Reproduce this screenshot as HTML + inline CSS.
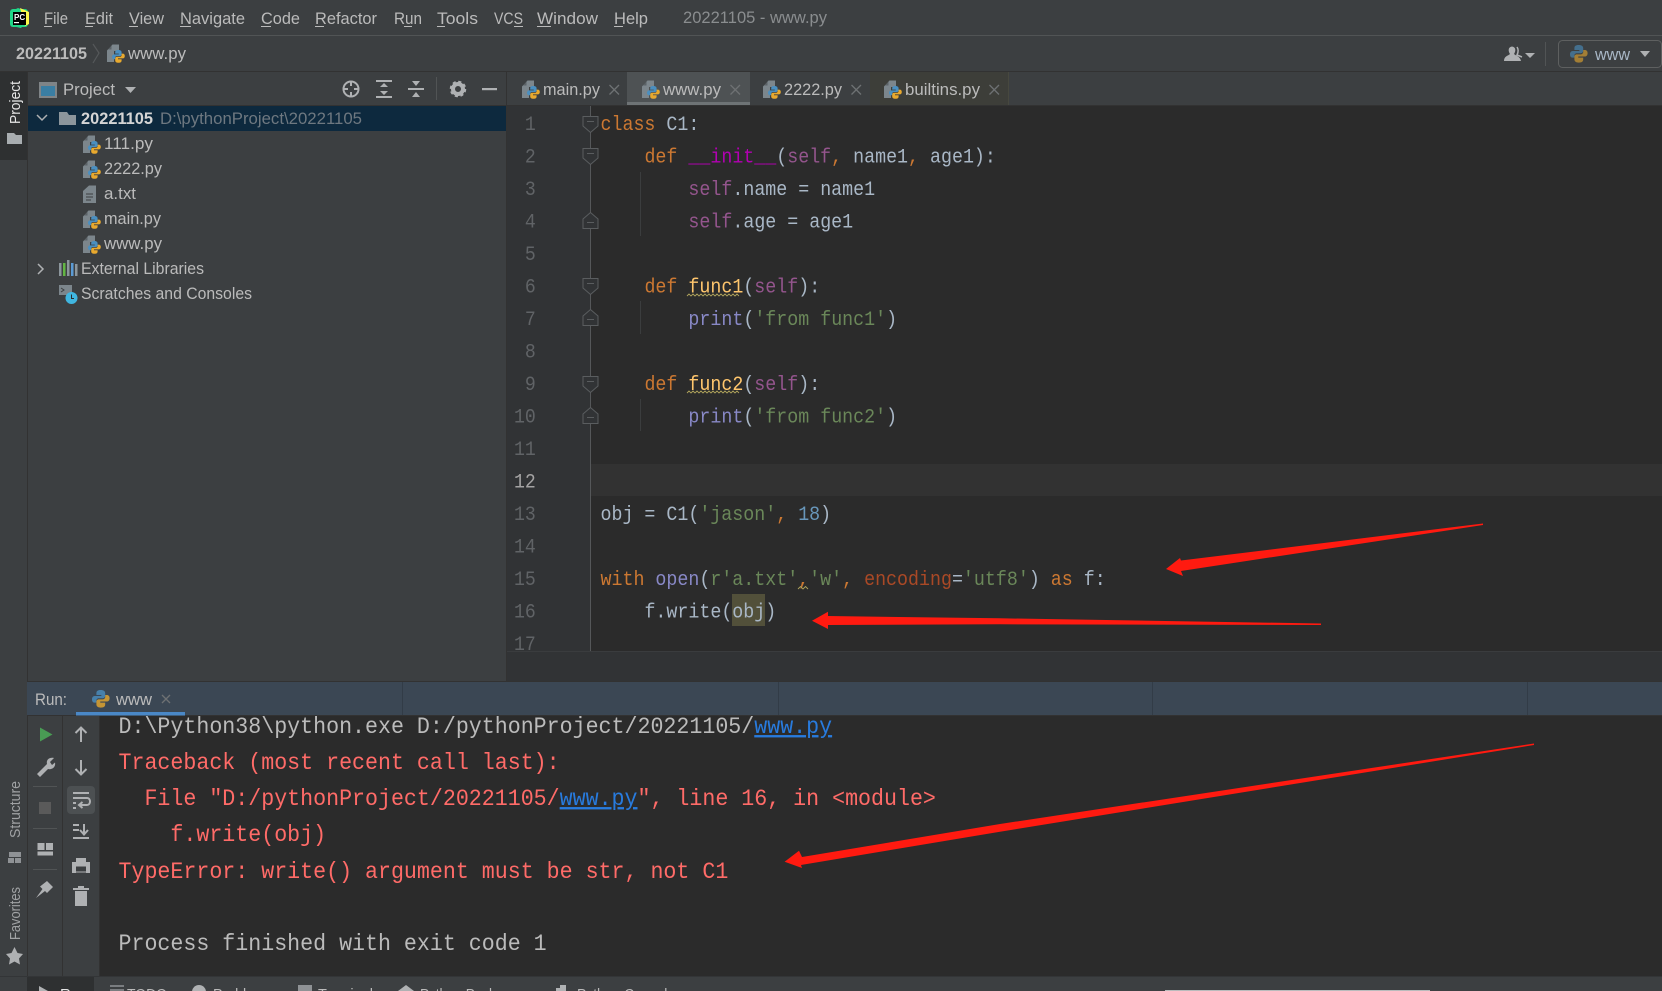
<!DOCTYPE html>
<html><head><meta charset="utf-8"><title>www.py</title>
<style>
html,body{margin:0;padding:0;background:#3c3f41;width:1662px;height:991px;overflow:hidden}
svg{display:block}
text{white-space:pre}
.u{font-family:"Liberation Sans",sans-serif;font-size:16.5px;fill:#bbbbbb}
.m{font-family:"Liberation Mono",monospace;font-size:20px;fill:#a9b7c6}
.c{font-family:"Liberation Mono",monospace;font-size:23.46px;fill:#ff6b68}
.n{font-family:"Liberation Mono",monospace;font-size:20px;fill:#606366}
.k{fill:#cc7832}.s{fill:#94558d}.g{fill:#6a8759}.b{fill:#8888c6}.f{fill:#ffc66d}.d{fill:#b200b2}.q{fill:#6897bb}.p{fill:#aa4926}
.i{fill:none;stroke:#afb1b3;stroke-width:2}
.x{stroke:#6e7173;stroke-width:1.3;fill:none}
.fold{fill:#313335;stroke:#5a5d5f;stroke-width:1}
</style></head><body>
<svg xmlns="http://www.w3.org/2000/svg" width="1662" height="991" viewBox="0 0 1662 991">
<defs>
<g id="sn"><path fill="#4a8fc0" d="M8 0C5 0 4 1 4 3V4.5H8.5V5.5H2.5C1 5.5 0 6.8 0 8.5C0 10.5 1 11.5 2.5 11.5H4V9.5C4 8.5 5 7.5 6 7.5H10C11 7.5 12 6.5 12 5.5V3C12 1 10.5 0 8 0Z"/><path fill="#e8a92e" transform="rotate(180 8 8)" d="M8 0C5 0 4 1 4 3V4.5H8.5V5.5H2.5C1 5.5 0 6.8 0 8.5C0 10.5 1 11.5 2.5 11.5H4V9.5C4 8.5 5 7.5 6 7.5H10C11 7.5 12 6.5 12 5.5V3C12 1 10.5 0 8 0Z"/></g>
<g id="py"><path fill="#7c868c" d="M0 6.5L5.5 0.5H12V7H7V18H0Z"/><path fill="#3c3f41" d="M4.5 1.5V5.5H1Z" opacity=".5"/><use href="#sn" transform="translate(5 6) scale(.8)"/></g>
<g id="fd"><path class="fold" d="M-7.5 -7.5H7.5V2L0 8.5L-7.5 2Z"/><path d="M-3.5 -2.5H3.5" stroke="#5a5d5f" stroke-width="1"/></g>
<g id="fu"><path class="fold" d="M-7.5 7.5H7.5V-2L0 -8.5L-7.5 -2Z"/><path d="M-3.5 1.5H3.5" stroke="#5a5d5f" stroke-width="1"/></g>
</defs>

<rect width="1662" height="991" fill="#3c3f41"/>
<!-- menu bar -->
<rect x="0" y="35" width="1662" height="1" fill="#515455"/>
<rect x="0" y="71" width="1662" height="1" fill="#323232"/>
<g>
<rect x="10" y="9" width="18" height="18" rx="3" fill="#21d789"/><path d="M10 12L18 8L28 12V20L21 28L12 26Z" fill="#21d789"/><path d="M20 8L29 12V24L25 26Z" fill="#fcf84a"/>
<rect x="13" y="12" width="13" height="13" fill="#000"/><text x="14" y="20" font-family="Liberation Sans,sans-serif" font-size="8" font-weight="700" fill="#fff">PC</text><rect x="14" y="22" width="5" height="1.2" fill="#fff"/>
</g>
<g class="menu">
<text class="u" x="44" y="24" textLength="24" lengthAdjust="spacingAndGlyphs">File</text><rect x="44" y="26" width="8" height="1" fill="#bbb"/>
<text class="u" x="85" y="24" textLength="28" lengthAdjust="spacingAndGlyphs">Edit</text><rect x="85" y="26" width="8" height="1" fill="#bbb"/>
<text class="u" x="129" y="24" textLength="35" lengthAdjust="spacingAndGlyphs">View</text><rect x="129" y="26" width="9" height="1" fill="#bbb"/>
<text class="u" x="180" y="24" textLength="65" lengthAdjust="spacingAndGlyphs">Navigate</text><rect x="180" y="26" width="11" height="1" fill="#bbb"/>
<text class="u" x="261" y="24" textLength="39" lengthAdjust="spacingAndGlyphs">Code</text><rect x="261" y="26" width="10" height="1" fill="#bbb"/>
<text class="u" x="315" y="24" textLength="62" lengthAdjust="spacingAndGlyphs">Refactor</text><rect x="315" y="26" width="9" height="1" fill="#bbb"/>
<text class="u" x="394" y="24" textLength="28" lengthAdjust="spacingAndGlyphs">Run</text><rect x="404" y="26" width="8" height="1" fill="#bbb"/>
<text class="u" x="437" y="24" textLength="41" lengthAdjust="spacingAndGlyphs">Tools</text><rect x="437" y="26" width="8" height="1" fill="#bbb"/>
<text class="u" x="494" y="24" textLength="29" lengthAdjust="spacingAndGlyphs">VCS</text><rect x="514" y="26" width="9" height="1" fill="#bbb"/>
<text class="u" x="537" y="24" textLength="61" lengthAdjust="spacingAndGlyphs">Window</text><rect x="537" y="26" width="14" height="1" fill="#bbb"/>
<text class="u" x="614" y="24" textLength="34" lengthAdjust="spacingAndGlyphs">Help</text><rect x="614" y="26" width="9" height="1" fill="#bbb"/>
<text class="u" x="683" y="23" textLength="144" lengthAdjust="spacingAndGlyphs" style="fill:#8a8d8f">20221105 - www.py</text>
</g>
<!-- nav bar -->
<text class="u" x="16" y="59" textLength="71" lengthAdjust="spacingAndGlyphs" font-weight="700" style="font-weight:700">20221105</text>
<path d="M93 44L99 53L93 63" fill="none" stroke="#55585a" stroke-width="1.2"/>
<use href="#py" transform="translate(107 44)"/>
<text class="u" x="128" y="59" textLength="58" lengthAdjust="spacingAndGlyphs">www.py</text>
<path d="M1504 61C1504 56 1508 56 1510 54C1508 51 1508 47 1512 46.500C1516 47 1516 51 1514 54C1516 56 1520 56 1521 61Z" fill="#afb1b3"/><path d="M1517 47C1519 50 1518 53 1517 55L1522 57" fill="none" stroke="#afb1b3" stroke-width="1.5"/>
<path d="M1525 53H1535L1530 58Z" fill="#afb1b3"/>
<rect x="1545" y="42" width="1" height="24" fill="#515455"/>
<rect x="1558.500" y="40.500" width="103" height="27" rx="4" fill="none" stroke="#5e6060"/>
<use href="#sn" transform="translate(1570 45) scale(1.1)" opacity=".6"/>
<text class="u" x="1595" y="60" textLength="35" lengthAdjust="spacingAndGlyphs" style="fill:#a9b7c6">www</text>
<path d="M1640 51H1650L1645 57Z" fill="#afb1b3"/>

<!-- left stripe -->
<rect x="27" y="72" width="1" height="904" fill="#323232"/>
<rect x="0" y="72" width="27" height="88" fill="#2e3031"/>
<text class="u" transform="translate(20 124) rotate(-90)" textLength="43" lengthAdjust="spacingAndGlyphs" style="font-size:14.500px;fill:#e6e6e6">Project</text>
<path d="M7 133H14L16 135H22V144H7Z" fill="#a8adb0"/>
<text class="u" transform="translate(20 838) rotate(-90)" textLength="57" lengthAdjust="spacingAndGlyphs" style="font-size:14.500px;fill:#a0a2a4">Structure</text>
<path d="M9 857h6v-5h-6zM8 858h6v5h-6zM15 852h6v5h-6zM15 858h6v5h-6z" fill="#8f9295"/>
<text class="u" transform="translate(20 940) rotate(-90)" textLength="53" lengthAdjust="spacingAndGlyphs" style="font-size:14.500px;fill:#a0a2a4">Favorites</text>
<path d="M14.500 947L17.500 953L23 954L19 958.500L20 964.500L14.500 961.500L9 964.500L10 958.500L6 954L11.500 953Z" fill="#afb1b3"/>

<!-- project header -->
<rect x="39" y="82" width="18" height="16" fill="#7f8487"/><rect x="41" y="86" width="14" height="10" fill="#3a7ea3"/>
<text class="u" x="63" y="95" textLength="52" lengthAdjust="spacingAndGlyphs">Project</text>
<path d="M125 87H136L130.500 93Z" fill="#afb1b3"/>
<circle cx="351" cy="89" r="7.500" class="i"/><path d="M351 81.500V86M351 92V96.500M343.500 89H348M354 89H358.500" class="i"/>
<path d="M376 81H392M376 97H392" class="i"/><path d="M380 87L384 83L388 87ZM380 91L384 95L388 91Z" fill="#afb1b3"/>
<path d="M408 89H424" class="i"/><path d="M412 81L416 86L420 81ZM412 97L416 92L420 97Z" fill="#afb1b3"/>
<rect x="436" y="77" width="1" height="23" fill="#515455"/>
<circle cx="458" cy="89" r="5" fill="none" stroke="#afb1b3" stroke-width="4"/><circle cx="458" cy="89" r="7" fill="none" stroke="#afb1b3" stroke-width="2.500" stroke-dasharray="3 2.500"/>
<rect x="482" y="88" width="15" height="2.200" fill="#afb1b3"/>
<rect x="27" y="105" width="480" height="1" fill="#323232"/>

<!-- tree -->
<rect x="28" y="106" width="478" height="25" fill="#0d293e"/>
<path d="M37 115L42 120L47 115" fill="none" stroke="#afb1b3" stroke-width="1.500"/>
<path d="M59 112H67L69 115H76V125H59Z" fill="#8c969c"/>
<text class="u" x="81" y="124" textLength="72" lengthAdjust="spacingAndGlyphs" style="font-weight:700;fill:#d5d5d5">20221105</text>
<text class="u" x="160" y="124" textLength="202" lengthAdjust="spacingAndGlyphs" style="fill:#6e7880">D:\pythonProject\20221105</text>
<use href="#py" transform="translate(83 135)"/><text class="u" x="104" y="149" textLength="49" lengthAdjust="spacingAndGlyphs">111.py</text>
<use href="#py" transform="translate(83 160)"/><text class="u" x="104" y="174" textLength="58" lengthAdjust="spacingAndGlyphs">2222.py</text>
<path d="M83 191L89 185.500H96V203H83Z" fill="#7c868c"/><path d="M86 194H93M86 197H93M86 200H91" stroke="#3c3f41" stroke-width="1"/>
<text class="u" x="104" y="199" textLength="32" lengthAdjust="spacingAndGlyphs">a.txt</text>
<use href="#py" transform="translate(83 210)"/><text class="u" x="104" y="224" textLength="57" lengthAdjust="spacingAndGlyphs">main.py</text>
<use href="#py" transform="translate(83 235)"/><text class="u" x="104" y="249" textLength="58" lengthAdjust="spacingAndGlyphs">www.py</text>
<path d="M38 264L43 269L38 274" fill="none" stroke="#afb1b3" stroke-width="1.500"/>
<rect x="59" y="263" width="2.500" height="13" fill="#8c969c"/><rect x="63" y="263" width="2.500" height="13" fill="#62b543"/><rect x="67" y="260" width="2.500" height="16" fill="#8c969c"/><rect x="71" y="263" width="2.500" height="13" fill="#5b9bd5"/><rect x="75" y="264" width="2.500" height="12" fill="#8c969c"/>
<text class="u" x="81" y="274" textLength="123" lengthAdjust="spacingAndGlyphs">External Libraries</text>
<path d="M59 285H72V295H59Z" fill="#7c868c"/><path d="M61 288L64 290L61 292" fill="none" stroke="#3c3f41"/><circle cx="71.500" cy="298" r="6" fill="#40b6e0"/><path d="M71.500 294.500V298.500H74" stroke="#2b2b2b" stroke-width="1" fill="none"/>
<text class="u" x="81" y="299" textLength="171" lengthAdjust="spacingAndGlyphs">Scratches and Consoles</text>

<!-- tabs -->
<rect x="506" y="72" width="1" height="610" fill="#323232"/>
<rect x="507" y="72" width="1155" height="34" fill="#3c3f41"/>
<rect x="627" y="72" width="123" height="30" fill="#4e5254"/>
<rect x="627" y="102" width="123" height="4" fill="#6e7375"/>
<rect x="870" y="72" width="138" height="33" fill="#3d3e39"/>
<rect x="1008" y="72" width="1" height="33" fill="#47483f"/>
<rect x="507" y="105" width="1155" height="1" fill="#323232"/>
<use href="#py" transform="translate(522 80)"/><text class="u" x="543" y="95" textLength="57" lengthAdjust="spacingAndGlyphs">main.py</text><path class="x" d="M609.500 85L619 94.500M619 85L609.500 94.500"/>
<use href="#py" transform="translate(642 80)"/><text class="u" x="663" y="95" textLength="58" lengthAdjust="spacingAndGlyphs">www.py</text><path class="x" d="M730.500 85L740 94.500M740 85L730.500 94.500"/>
<use href="#py" transform="translate(763 80)"/><text class="u" x="784" y="95" textLength="58" lengthAdjust="spacingAndGlyphs">2222.py</text><path class="x" d="M851.500 85L861 94.500M861 85L851.500 94.500"/>
<use href="#py" transform="translate(884 80)"/><text class="u" x="905" y="95" textLength="75" lengthAdjust="spacingAndGlyphs">builtins.py</text><path class="x" d="M989.500 85L999 94.500M999 85L989.500 94.500"/>

<!-- editor -->
<rect x="507" y="106" width="1155" height="545" fill="#2b2b2b"/>
<rect x="507" y="106" width="84" height="545" fill="#313335"/>
<rect x="591" y="464" width="1071" height="32" fill="#323232"/>
<rect x="590" y="106" width="1" height="545" fill="#555759"/>
<rect x="640" y="172" width="1" height="64" fill="#3b3d3e"/><rect x="640" y="301" width="1" height="33" fill="#3b3d3e"/><rect x="640" y="399" width="1" height="32" fill="#3b3d3e"/>
<rect x="732" y="594" width="33" height="32" fill="#52503a"/>
<use href="#fd" x="590.500" y="124"/><use href="#fd" x="590.500" y="156"/><use href="#fu" x="590.500" y="221"/><use href="#fd" x="590.500" y="286"/><use href="#fu" x="590.500" y="318"/><use href="#fd" x="590.500" y="384"/><use href="#fu" x="590.500" y="416"/>
<clipPath id="ed"><rect x="507" y="106" width="1155" height="545"/></clipPath>
<g clip-path="url(#ed)">
<g transform="translate(514 0) scale(.9085 1)">
<text class="n" x="12" y="130">1</text><text class="n" x="12" y="162.500">2</text><text class="n" x="12" y="195">3</text><text class="n" x="12" y="227.500">4</text><text class="n" x="12" y="260">5</text><text class="n" x="12" y="292.500">6</text><text class="n" x="12" y="325">7</text><text class="n" x="12" y="357.500">8</text><text class="n" x="12" y="390">9</text><text class="n" x="0" y="422.500">10</text><text class="n" x="0" y="455">11</text><text class="n" x="0" y="487.500" style="fill:#a4a3a3">12</text><text class="n" x="0" y="520">13</text><text class="n" x="0" y="552.500">14</text><text class="n" x="0" y="585">15</text><text class="n" x="0" y="617.500">16</text><text class="n" x="0" y="650">17</text>
</g>
<g transform="translate(600.500 0) scale(.916 1)">
<text class="m" x="0" y="130"><tspan class="k">class</tspan> C1:</text>
<text class="m" x="48" y="162.500"><tspan class="k">def</tspan> <tspan class="d">__init__</tspan>(<tspan class="s">self</tspan><tspan class="k">,</tspan> name1<tspan class="k">,</tspan> age1):</text>
<text class="m" x="96" y="195"><tspan class="s">self</tspan>.name = name1</text>
<text class="m" x="96" y="227.500"><tspan class="s">self</tspan>.age = age1</text>
<text class="m" x="48" y="292.500"><tspan class="k">def</tspan> <tspan class="f">func1</tspan>(<tspan class="s">self</tspan>):</text>
<text class="m" x="96" y="325"><tspan class="b">print</tspan>(<tspan class="g">'from func1'</tspan>)</text>
<text class="m" x="48" y="390"><tspan class="k">def</tspan> <tspan class="f">func2</tspan>(<tspan class="s">self</tspan>):</text>
<text class="m" x="96" y="422.500"><tspan class="b">print</tspan>(<tspan class="g">'from func2'</tspan>)</text>
<text class="m" x="0" y="520">obj = C1(<tspan class="g">'jason'</tspan><tspan class="k">,</tspan> <tspan class="q">18</tspan>)</text>
<text class="m" x="0" y="585"><tspan class="k">with</tspan> <tspan class="b">open</tspan>(<tspan class="g">r'a.txt'</tspan><tspan class="k">,</tspan><tspan class="g">'w'</tspan><tspan class="k">,</tspan> <tspan class="p">encoding</tspan>=<tspan class="g">'utf8'</tspan>) <tspan class="k">as</tspan> f:</text>
<text class="m" x="48" y="617.500">f.write(obj)</text>
</g>
</g>
<path d="M687 296l2-2 2 2 2-2 2 2 2-2 2 2 2-2 2 2 2-2 2 2 2-2 2 2 2-2 2 2 2-2 2 2 2-2 2 2 2-2 2 2 2-2 2 2 2-2 2 2 2-2 2 2" fill="none" stroke="#b0a35c" stroke-width=".9"/>
<path d="M687 393l2-2 2 2 2-2 2 2 2-2 2 2 2-2 2 2 2-2 2 2 2-2 2 2 2-2 2 2 2-2 2 2 2-2 2 2 2-2 2 2 2-2 2 2 2-2 2 2 2-2 2 2" fill="none" stroke="#b0a35c" stroke-width=".9"/>
<path d="M798 589l2.500-2.500 2.500 2.500 2.500-2.500 2.500 2.500" fill="none" stroke="#b0a35c" stroke-width=".9"/>
<rect x="507" y="651" width="1155" height="31" fill="#313335"/>
<rect x="507" y="651" width="1155" height="1" fill="#3a3c3e"/>

<!-- run header -->
<rect x="27" y="681" width="1635" height="35" fill="#3b4754"/>
<rect x="27" y="681" width="1635" height="1" fill="#323232"/>
<rect x="27" y="715" width="1635" height="1" fill="#323232"/>
<rect x="402" y="682" width="1" height="33" fill="#323c47"/><rect x="778" y="682" width="1" height="33" fill="#323c47"/><rect x="1152" y="682" width="1" height="33" fill="#323c47"/><rect x="1527" y="682" width="1" height="33" fill="#323c47"/>
<text class="u" x="35" y="705" textLength="32" lengthAdjust="spacingAndGlyphs">Run:</text>
<use href="#sn" transform="translate(92 690) scale(1.1)" opacity=".8"/>
<text class="u" x="116" y="705" textLength="36" lengthAdjust="spacingAndGlyphs">www</text>
<path class="x" d="M162 695L170 703M170 695L162 703"/>
<rect x="76" y="712" width="109" height="3.500" fill="#4a88c7"/>

<!-- run toolbars -->
<rect x="62" y="716" width="1" height="260" fill="#323232"/>
<rect x="99" y="716" width="1" height="260" fill="#323232"/>
<path d="M40 727.500L52.500 734.500L40 741.500Z" fill="#499c54"/>
<path d="M37 774L47 764C46 760 49 757 54 758L50 762L52 765L55 762.500C56 767 52 770 48 769L40 777Z" fill="#afb1b3"/>
<rect x="33" y="786" width="24" height="1" fill="#515455"/>
<rect x="39" y="802" width="12" height="12" fill="#5a5a5a"/>
<rect x="33" y="828" width="24" height="1" fill="#515455"/>
<path d="M37.500 843H44.500V850H37.500ZM46 843H53V850H46ZM37.500 851.500H53V855.500H37.500Z" fill="#afb1b3"/>
<rect x="33" y="869" width="24" height="1" fill="#515455"/>
<path d="M36 898L42.500 889L40 886.500L47 881L53 887L47 893L45 891Z" fill="#afb1b3"/>
<path d="M81 728V742M75.500 733L81 727.500L86.500 733" class="i" stroke-width="2"/>
<path d="M81 760V774M75.500 769L81 774.500L86.500 769" class="i"/>
<rect x="67" y="786" width="28" height="28" rx="4" fill="#4c5052"/>
<path d="M73 793H89M73 798H87C91 798 91 805 87 805H80M82.500 802L79 805L82.500 808M73 803H76M73 808H76" class="i" stroke-width="1.700"/>
<path d="M73 825H79M73 830H79M73 838H89M84 824V834M80 830L84 834.500L88 830" class="i" stroke-width="1.800"/>
<path d="M76 858H86V862H90V873H86V869H76V873H72V862H76Z" fill="#afb1b3"/><rect x="75.500" y="866" width="11" height="6" fill="#3c3f41" stroke="#afb1b3"/>
<path d="M75 891H87V906H75ZM73 888H89V890H73ZM78 886H84V888H78Z" fill="#afb1b3"/>

<!-- console -->
<rect x="100" y="716" width="1562" height="260" fill="#2b2b2b"/>
<clipPath id="cl"><rect x="100" y="716" width="1562" height="260"/></clipPath>
<g clip-path="url(#cl)"><g transform="translate(118.500 0) scale(.9225 1)">
<text class="c" x="0" y="733" style="fill:#bbbbbb">D:\Python38\python.exe D:/pythonProject/20221105/<tspan style="fill:#287bde;text-decoration:underline">www.py</tspan></text>
<text class="c" x="0" y="769">Traceback (most recent call last):</text>
<text class="c" x="0" y="805">  File "D:/pythonProject/20221105/<tspan style="fill:#287bde;text-decoration:underline">www.py</tspan>", line 16, in &lt;module&gt;</text>
<text class="c" x="0" y="841">    f.write(obj)</text>
<text class="c" x="0" y="878">TypeError: write() argument must be str, not C1</text>
<text class="c" x="0" y="950" style="fill:#bbbbbb">Process finished with exit code 1</text>
</g></g>

<!-- bottom bar -->
<rect x="0" y="976" width="1662" height="15" fill="#3c3f41"/>
<rect x="0" y="976" width="1662" height="1" fill="#333537"/>
<rect x="27" y="977" width="67" height="14" fill="#2e3031"/>
<path d="M39 986L48 991H39Z" fill="#afb1b3"/>
<g style="font-size:15px">
<text class="u" x="60" y="999" style="font-size:15px;fill:#e6e6e6">Run</text>
<path d="M110 986H124M110 990H124" stroke="#8f9295" stroke-width="1.500"/>
<text class="u" x="127" y="999" textLength="40" lengthAdjust="spacingAndGlyphs" style="font-size:15px">TODO</text>
<circle cx="199" cy="992" r="7" fill="#afb1b3"/>
<text class="u" x="213" y="999" textLength="60" lengthAdjust="spacingAndGlyphs" style="font-size:15px">Problems</text>
<rect x="298" y="985" width="14" height="8" fill="#8f9295"/>
<text class="u" x="318" y="999" textLength="55" lengthAdjust="spacingAndGlyphs" style="font-size:15px">Terminal</text>
<path d="M398 991L406 985L414 991Z" fill="#afb1b3"/>
<text class="u" x="420" y="999" textLength="105" lengthAdjust="spacingAndGlyphs" style="font-size:15px">Python Packages</text>
<path d="M556 991V988H560V985H566V991Z" fill="#afb1b3"/>
<text class="u" x="577" y="999" textLength="98" lengthAdjust="spacingAndGlyphs" style="font-size:15px">Python Console</text>
</g>
<rect x="1165" y="990" width="265" height="1" fill="#b9bbbc"/>

<!-- arrows -->
<path fill="#ff1a10" d="M1483 523.500L1181 560.500L1180 558L1166 569L1183 576L1181 571L1483 525Z"/>
<path fill="#ff1a10" d="M1321 623.500L1000 618.300L828 616L828 611.700L812 620.700L828 629L828 625L1000 624.300L1321 625Z"/>
<path fill="#ff1a10" d="M1534 743.500L1000 824L802 857L799 850.700L784.600 861.700L802 868L801 865L1000 831.700L1534 745Z"/>
</svg>
</body></html>
